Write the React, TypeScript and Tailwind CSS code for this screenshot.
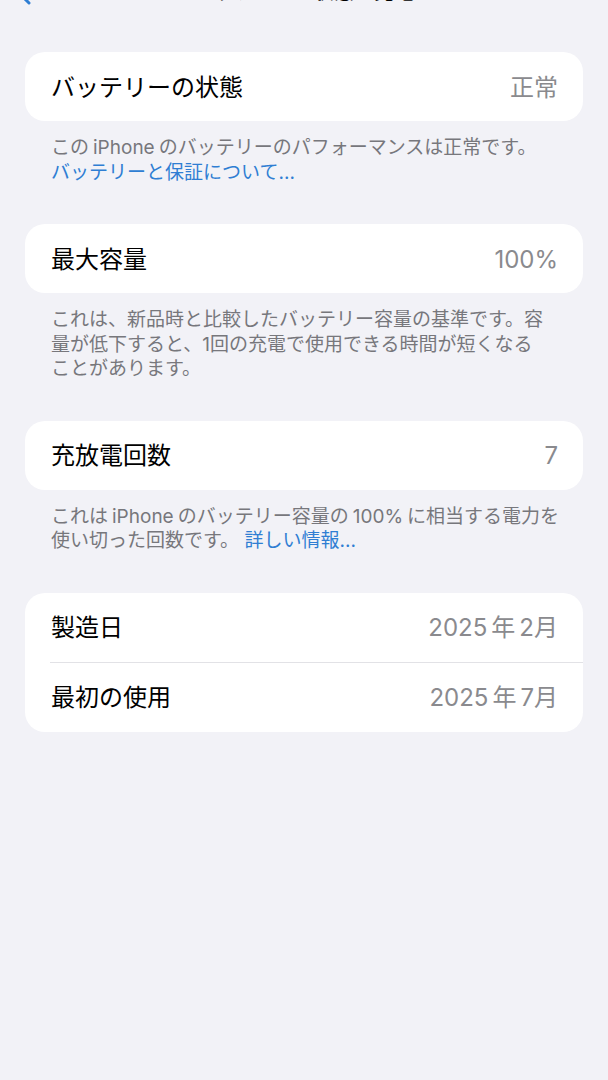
import { ReactNode } from 'react';

const font = { fontFamily: 'Inter, "Noto Sans CJK JP", sans-serif' };

function Row({ label, value }: { label: string; value: ReactNode }) {
  return (
    <div className="flex h-[69px] items-center justify-between pl-[26px] pr-[25px] pt-[2px]">
      <span className="text-[24px] text-black">{label}</span>
      <span className="text-[24px] text-[#8a8a8e]">{value}</span>
    </div>
  );
}

function Card({ children }: { children: ReactNode }) {
  return <div className="overflow-hidden rounded-[20px] bg-white">{children}</div>;
}

function Footer({ children }: { children: ReactNode }) {
  return (
    <p className="mt-[15px] mb-[39px] whitespace-nowrap pl-[26px] text-[19px] leading-[24.5px] text-[#77777c]">
      {children}
    </p>
  );
}

function Link({ children }: { children: ReactNode }) {
  return <span className="text-[#2f7ed3]">{children}</span>;
}

// latin words get a little air around them, like iOS does in Japanese text
function Latin({ children }: { children: ReactNode }) {
  return <span className="mx-[4px]">{children}</span>;
}

function Month({ m }: { m: string }) {
  return (
    <>
      2025<span className="mx-[4px]">年</span>
      {m}月
    </>
  );
}

export default function App() {
  return (
    <div className="flex min-h-screen flex-col bg-[#f2f2f7] px-[25px]" style={font}>
      {/* nav bar, scrolled almost out of view */}
      <div className="relative -mx-[25px] -mt-[42px] flex h-[44px] shrink-0 items-end justify-center">
        <svg
          className="absolute left-[17px] bottom-[-3px]"
          width="14"
          height="24"
          viewBox="0 0 14 24"
          fill="none"
          stroke="#2f7ed3"
          strokeWidth="3"
          strokeLinecap="round"
          strokeLinejoin="round"
        >
          <path d="M12 2 L2 12 L12 22" />
        </svg>
        <span className="text-[20px] leading-none font-semibold text-black">バッテリーの状態と充電</span>
      </div>

      <div className="mt-[50px]">
        <Card>
          <Row label="バッテリーの状態" value="正常" />
        </Card>
        <Footer>
          この<Latin>iPhone</Latin>のバッテリーのパフォーマンスは正常です。
          <br />
          <Link>バッテリーと保証について...</Link>
        </Footer>

        <Card>
          <Row label="最大容量" value="100%" />
        </Card>
        <Footer>
          これは、新品時と比較したバッテリー容量の基準です。容
          <br />
          量が低下すると、1回の充電で使用できる時間が短くなる
          <br />
          ことがあります。
        </Footer>

        <Card>
          <Row label="充放電回数" value="7" />
        </Card>
        <Footer>
          これは<Latin>iPhone</Latin>のバッテリー容量の<Latin>100%</Latin>に相当する電力を
          <br />
          使い切った回数です。 <Link>詳しい情報...</Link>
        </Footer>

        <Card>
          <Row label="製造日" value={<Month m="2" />} />
          <div className="ml-[25px] h-px bg-[#e2e2e6]" />
          <Row label="最初の使用" value={<Month m="7" />} />
        </Card>
      </div>
    </div>
  );
}
